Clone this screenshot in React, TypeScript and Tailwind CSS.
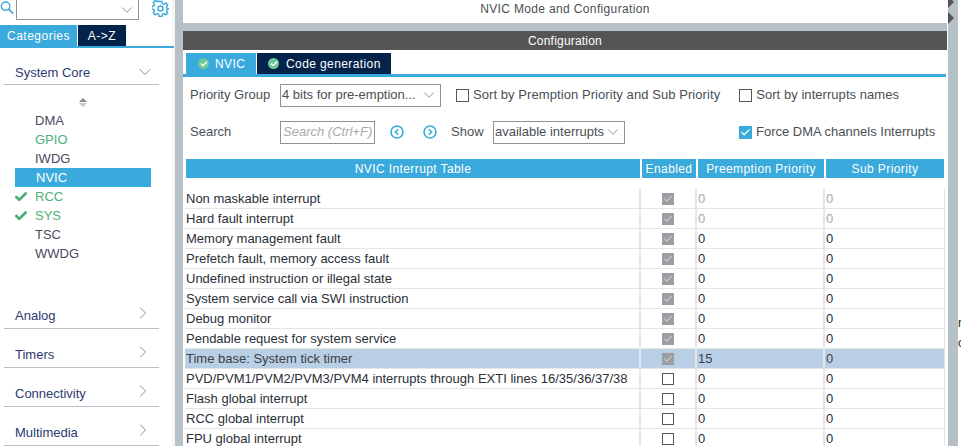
import { Check, ChevronDown, ChevronRight } from "lucide-react";

const font = "font-['Liberation_Sans',Arial,sans-serif]";

const periph = [
  { name: "DMA", tone: "text-[#4a4a5e]" },
  { name: "GPIO", tone: "text-[#4cb27a]" },
  { name: "IWDG", tone: "text-[#4a4a5e]" },
  { name: "NVIC", tone: "text-white", active: true },
  { name: "RCC", tone: "text-[#4cb27a]", ok: true },
  { name: "SYS", tone: "text-[#4cb27a]", ok: true },
  { name: "TSC", tone: "text-[#4a4a5e]" },
  { name: "WWDG", tone: "text-[#4a4a5e]" },
];

const rows = [
  { name: "Non maskable interrupt", on: true, pre: "0", sub: "0", dim: true },
  { name: "Hard fault interrupt", on: true, pre: "0", sub: "0", dim: true },
  { name: "Memory management fault", on: true, pre: "0", sub: "0" },
  { name: "Prefetch fault, memory access fault", on: true, pre: "0", sub: "0" },
  { name: "Undefined instruction or illegal state", on: true, pre: "0", sub: "0" },
  { name: "System service call via SWI instruction", on: true, pre: "0", sub: "0" },
  { name: "Debug monitor", on: true, pre: "0", sub: "0" },
  { name: "Pendable request for system service", on: true, pre: "0", sub: "0" },
  { name: "Time base: System tick timer", on: true, pre: "15", sub: "0", sel: true },
  { name: "PVD/PVM1/PVM2/PVM3/PVM4 interrupts through EXTI lines 16/35/36/37/38", on: false, pre: "0", sub: "0" },
  { name: "Flash global interrupt", on: false, pre: "0", sub: "0" },
  { name: "RCC global interrupt", on: false, pre: "0", sub: "0" },
  { name: "FPU global interrupt", on: false, pre: "0", sub: "0" },
];

function Category({ label }: { label: string }) {
  return (
    <div className="mr-[13px] ml-1 flex h-[39px] items-end justify-between border-b border-[#b5c0c7] pr-[6px] pb-[3px] pl-[11px] text-[13px] leading-[18px] text-[#2c3a70]">
      <span>{label}</span>
      <ChevronRight className="mb-[2px] size-[20px] text-[#8a8f94]" strokeWidth={1.2} />
    </div>
  );
}

function Box({ checked }: { checked: boolean }) {
  if (checked) {
    return (
      <span className="flex size-3 items-center justify-center bg-[#9b9fa3]">
        <Check className="size-[10px] text-[#e8e8e8]" strokeWidth={2.2} />
      </span>
    );
  }
  return <span className="size-3 border border-[#55595c] bg-white" />;
}

function TabCheck() {
  return (
    <span className="flex size-[11px] items-center justify-center rounded-full bg-[#6cc99a]">
      <Check className="size-[8px] text-white" strokeWidth={4} />
    </span>
  );
}

export default function App() {
  return (
    <div className={`${font} flex h-[446px] w-[961px] overflow-hidden bg-white text-[13px]`}>
      {/* Sidebar */}
      <aside className="w-[175px] shrink-0 border-r-[3px] border-[#f4f5f5]">
        <div className="flex h-[25px] items-start">
          <svg viewBox="0 0 14 15" className="mt-px size-[14px] text-[#3aa9dc]" fill="none" stroke="currentColor" strokeWidth="1.6">
            <circle cx="5.5" cy="5.5" r="4.5" />
            <path d="M9 9l4.5 4.5" />
          </svg>
          <div className="ml-[2px] flex h-[20px] w-[123px] items-center justify-end border border-t-0 border-[#8d9296] pr-[2px]">
            <ChevronDown className="size-[18px] text-[#85898d]" strokeWidth={1.2} />
          </div>
          <svg viewBox="0 0 24 24" className="ml-[13px] size-[17px] text-[#3aa9dc]" fill="none" stroke="currentColor" strokeWidth="2">
            <circle cx="12" cy="12" r="3.5" />
            <path d="M10 2h4l.6 3 2.2.9 2.6-1.7 2.8 2.8-1.7 2.6.9 2.2 3 .6v0l-3 1 -.9 2.2 1.7 2.6-2.8 2.8-2.6-1.7-2.2.9-.6 3h-4l-.6-3-2.2-.9-2.6 1.7-2.8-2.8 1.7-2.6-.9-2.2-3-.6v-4l3-.6.9-2.2-1.7-2.6 2.8-2.8 2.6 1.7 2.2-.9z" />
          </svg>
        </div>
        <div className="mr-[-2px] flex h-[23px] border-b-[2px] border-[#3aa9dc] text-[12px] tracking-[0.5px] text-white">
          <div className="flex w-[77px] items-center justify-center bg-[#3aa9dc]">Categories</div>
          <div className="ml-px flex w-[48px] items-center justify-center bg-[#03234b]">A-&gt;Z</div>
        </div>

        <div className="mr-[13px] ml-1 mt-[15px] flex h-[22px] items-start justify-between border-b border-[#b5c0c7] pt-px pr-[4px] pl-[11px] leading-[18px] text-[#2c3a70]">
          <span>System Core</span>
          <ChevronDown className="-mt-[2px] size-[20px] text-[#8a8f94]" strokeWidth={1.2} />
        </div>

        <div className="mt-[13px] ml-[78px] flex w-[9px] flex-col items-center gap-px">
          <span className="h-0 w-0 border-x-[4px] border-b-[4px] border-x-transparent border-b-[#8a8a8a]" />
          <span className="h-0 w-0 border-x-[4px] border-t-[4px] border-x-transparent border-t-[#c8c8c8]" />
        </div>

        <div className="mt-[4px] ml-[15px] w-[136px]">
          {periph.map((p) => (
            <div key={p.name} className={`flex h-[19px] items-center ${p.active ? "bg-[#3aa9dc]" : ""} ${p.tone}`}>
              <span className="flex w-5 justify-start">
                {p.ok && <Check className="-ml-px size-[14px] text-[#45ad78]" strokeWidth={4.5} />}
              </span>
              <span className={p.active ? "ml-px" : ""}>{p.name}</span>
            </div>
          ))}
        </div>

        <div className="mt-[27px]">
          <Category label="Analog" />
          <Category label="Timers" />
          <Category label="Connectivity" />
          <Category label="Multimedia" />
        </div>
      </aside>

      <div className="w-2 shrink-0 bg-[#b5c0c7]" />

      {/* Main */}
      <main className="flex w-[764px] shrink-0 flex-col">
        <div className="flex h-[23px] items-center justify-center pb-[6px] text-[12px] tracking-[0.35px] text-[#4a4f55]">
          NVIC Mode and Configuration
        </div>
        <div className="h-2 bg-[#b5c0c7]" />
        <div className="flex h-[19px] items-center justify-center bg-[#545554] text-[12px] tracking-[0.2px] text-white">
          Configuration
        </div>

        <div className="mt-[3px] mr-px flex h-[24px] border-b-[3px] border-[#3aa9dc] pl-[3px] text-[12px] tracking-[0.4px] text-white">
          <div className="flex w-[70px] items-center gap-[6px] bg-[#3aa9dc] pl-[12px]">
            <TabCheck />
            <span>NVIC</span>
          </div>
          <div className="ml-px flex w-[134px] items-center gap-[7px] bg-[#03234b] pl-[11px]">
            <TabCheck />
            <span>Code generation</span>
          </div>
        </div>

        {/* Options */}
        <div className="flex h-[36px] items-center pl-[7px] text-[#4a4f55]">
          <span className="w-[90px]">Priority Group</span>
          <div className="flex h-[23px] w-[161px] items-center justify-between whitespace-nowrap border border-[#8d9296] pr-[2px] pl-px">
            <span>4 bits for pre-emption...</span>
            <ChevronDown className="size-[18px] text-[#85898d]" strokeWidth={1.2} />
          </div>
          <span className="ml-[15px] size-[13px] border border-[#55595c]" />
          <span className="ml-[4px] tracking-[0.07px]">Sort by Premption Priority and Sub Priority</span>
          <span className="ml-[19px] size-[13px] border border-[#55595c]" />
          <span className="ml-[4px] tracking-[0.05px]">Sort by interrupts names</span>
        </div>
        <div className="flex h-[38px] items-center pl-[7px] text-[#4a4f55]">
          <span className="w-[90px]">Search</span>
          <div className="flex h-[23px] w-[95px] items-center whitespace-nowrap border border-[#8d9296] pl-[2px] italic text-[#a9a9a9]">
            Search (Ctrl+F)
          </div>
          <svg viewBox="0 0 14 14" className="ml-[15px] size-[14px] text-[#3aa9dc]" fill="none" stroke="currentColor" strokeWidth="1.6">
            <circle cx="7" cy="7" r="6" />
            <path d="M8.2 4.2L5.4 7l2.8 2.8" />
          </svg>
          <svg viewBox="0 0 14 14" className="ml-[19px] size-[14px] text-[#3aa9dc]" fill="none" stroke="currentColor" strokeWidth="1.6">
            <circle cx="7" cy="7" r="6" />
            <path d="M5.8 4.2L8.6 7l-2.8 2.8" />
          </svg>
          <span className="ml-[14px] w-[32px]">Show</span>
          <div className="ml-[10px] flex h-[23px] w-[132px] items-center justify-between whitespace-nowrap border border-[#8d9296] pr-[2px] pl-px">
            <span>available interrupts</span>
            <ChevronDown className="size-[18px] text-[#85898d]" strokeWidth={1.2} />
          </div>
          <span className="ml-[114px] flex size-[13px] items-center justify-center bg-[#3aa9dc]">
            <Check className="size-[11px] text-white" strokeWidth={2.6} />
          </span>
          <span className="ml-[4px] whitespace-nowrap">Force DMA channels Interrupts</span>
        </div>

        {/* Interrupt table */}
        <div className="mt-[8px] ml-[3px] flex h-[19px] gap-[2px] text-[12px] tracking-[0.4px] text-white">
          <div className="flex w-[454px] items-center justify-center bg-[#3aa9dc]">NVIC Interrupt Table</div>
          <div className="flex w-[54px] items-center justify-center bg-[#3aa9dc]">Enabled</div>
          <div className="flex w-[126px] items-center justify-center bg-[#3aa9dc]">Preemption Priority</div>
          <div className="flex w-[118px] items-center justify-center bg-[#3aa9dc]">Sub Priority</div>
        </div>
        <div className="mt-[11px] ml-[2px] min-h-0 w-[760px] flex-1 overflow-hidden">
          {rows.map((r) => (
            <div
              key={r.name}
              className={`flex h-[20px] items-center border-b border-[#e3e6e9] ${r.sel ? "bg-[#b8cfe6] text-[#3c4048]" : "text-[#2b2f36]"}`}
            >
              <div className="flex h-full w-[456px] items-center whitespace-nowrap border-r-2 border-[#e3e6e9] pl-px">{r.name}</div>
              <div className="flex h-full w-[56px] items-center justify-center border-r-2 border-[#e3e6e9]">
                <Box checked={r.on} />
              </div>
              <div className={`flex h-full w-[128px] items-center border-r-2 border-[#e3e6e9] pl-px ${r.dim ? "text-[#a3a8ac]" : ""}`}>{r.pre}</div>
              <div className={`flex h-full w-[120px] items-center border-r border-[#e3e6e9] pl-px ${r.dim ? "text-[#a3a8ac]" : ""}`}>{r.sub}</div>
            </div>
          ))}
        </div>
      </main>

      <div className="w-px shrink-0" />
      <div className="relative w-[10px] shrink-0 bg-[#b5c0c7]">
        <span className="absolute top-[-4px] left-0 h-0 w-0 border-y-[6px] border-l-[6px] border-y-transparent border-l-[#555]" />
        <span className="absolute top-[12px] left-0 h-0 w-0 border-y-[6px] border-l-[6px] border-y-transparent border-l-[#555]" />
      </div>
      <div className="relative flex-1">
        <span className="absolute top-[316px] left-0 text-[12px] leading-[14px] text-[#222]">r</span>
        <span className="absolute top-[336px] left-0 text-[12px] leading-[14px] text-[#222]">c</span>
      </div>
    </div>
  );
}
